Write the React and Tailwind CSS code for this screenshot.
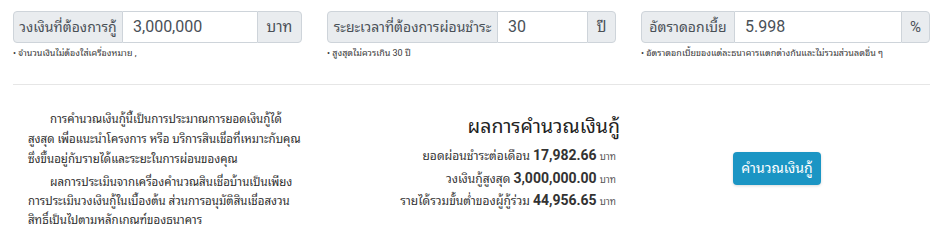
import React from "react";

function Group({ label, labelW, value, unit, unitW, help }) {
  return (
    <div>
      <div className="flex h-[32px] text-[#495057]">
        <div className={`flex items-center justify-center ${labelW} shrink-0 bg-[#e9ecef] border border-[#ced4da] rounded-l-[4px] whitespace-nowrap text-[14px]`}>
          {label}
        </div>
        <div className="flex-1 flex items-center px-[10px] border-y border-[#ced4da] bg-white min-w-0 text-[16px]">
          {value}
        </div>
        <div className={`flex items-center justify-center ${unitW} shrink-0 bg-[#e9ecef] border border-[#ced4da] rounded-r-[4px] whitespace-nowrap text-[15px]`}>
          {unit}
        </div>
      </div>
      <div className="mt-[3px] text-[9px] leading-[14px] text-[#3a3a3a] whitespace-nowrap">• {help}</div>
    </div>
  );
}

function Row({ label, value }) {
  return (
    <div className="flex justify-end items-baseline gap-x-[3px] h-[22.5px] text-[#333] whitespace-nowrap">
      <span className="text-[12px] leading-none">{label}</span>
      <span className="text-[14px] leading-none font-bold">{value}</span>
      <span className="text-[9.5px] leading-none text-[#555]">บาท</span>
    </div>
  );
}

export default function App() {
  return (
    <div className="w-[940px] h-[244px] bg-white pl-[13px] pr-[10px] pt-[11px] overflow-hidden font-[Roboto,'Noto_Sans_Thai_Looped',sans-serif]">
      <div className="grid grid-cols-3 gap-x-[25px]">
        <Group label="วงเงินที่ต้องการกู้" labelW="w-[110px]" value="3,000,000" unit="บาท" unitW="w-[45px]" help="จำนวนเงินไม่ต้องใส่เครื่องหมาย ," />
        <Group label="ระยะเวลาที่ต้องการผ่อนชำระ" labelW="w-[171px]" value="30" unit="ปี" unitW="w-[29px]" help="สูงสุดไม่ควรเกิน 30 ปี" />
        <Group label="อัตราดอกเบี้ย" labelW="w-[94px]" value="5.998" unit="%" unitW="w-[29px]" help="อัตราดอกเบี้ยของแต่ละธนาคารแตกต่างกันและไม่รวมส่วนลดอื่น ๆ" />
      </div>
      <div className="mt-[24px] border-t border-[#e6e6e6]" />
      <div className="grid grid-cols-3 gap-x-[25px] mt-[21px]">
        <div className="pl-[15px] pt-[3px] text-[11.5px] leading-[20px] text-[#2e2e2e] whitespace-nowrap">
          <p className="indent-[22px]">
            การคำนวณเงินกู้นี้เป็นการประมาณการยอดเงินกู้ได้
            <br />
            สูงสุด เพื่อแนะนำโครงการ หรือ บริการสินเชื่อที่เหมาะกับคุณ
            <br />
            ซึ่งขึ้นอยู่กับรายได้และระยะในการผ่อนของคุณ
          </p>
          <p className="indent-[22px] mt-[4px] leading-[19px]">
            ผลการประเมินจากเครื่องคำนวณสินเชื่อบ้านเป็นเพียง
            <br />
            การประเมินวงเงินกู้ในเบื้องต้น ส่วนการอนุมัติสินเชื่อสงวน
            <br />
            สิทธิ์เป็นไปตามหลักเกณฑ์ของธนาคาร
          </p>
        </div>
        <div className="text-right">
          <div className="text-[19.5px] leading-[28px] text-[#222] mt-[7px] -mr-[4px]">ผลการคำนวณเงินกู้</div>
          <div className="mt-[7px]">
            <Row label="ยอดผ่อนชำระต่อเดือน" value="17,982.66" />
            <Row label="วงเงินกู้สูงสุด" value="3,000,000.00" />
            <Row label="รายได้รวมขั้นต่ำของผู้กู้ร่วม" value="44,956.65" />
          </div>
        </div>
        <div className="pt-[46px] pl-[92px]">
          <button className="h-[33px] w-[88px] rounded-[4px] bg-[#1b95c4] text-white text-[14px] whitespace-nowrap shadow-[0_1px_3px_rgba(0,0,0,0.15)]">
            คำนวณเงินกู้
          </button>
        </div>
      </div>
    </div>
  );
}
